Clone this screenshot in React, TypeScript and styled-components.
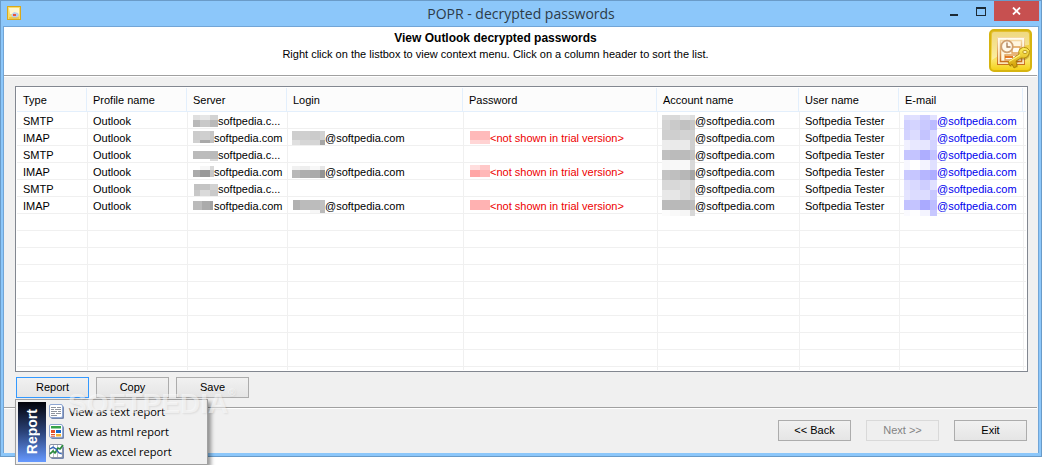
import React from 'react';
import styled, { createGlobalStyle } from 'styled-components';

const uiFont = '"Liberation Sans", Arial, sans-serif';
const shellFont = '"Open Sans", "Noto Sans", sans-serif';

const GlobalStyle = createGlobalStyle`
  * { box-sizing: border-box; }
  body { margin: 0; min-height: 100vh; background: #fff; font-family: ${uiFont}; font-size: 11px; color: #000; }
  button { font: inherit; color: inherit; padding: 0; }
`;

/* ---------- window frame ---------- */

const Window = styled.div`
  position: relative;
  border: 1px solid #6a9bc8;
  background: #8cc7fa;
  padding: 0 2px 3px;
`;

const TitleBar = styled.header`
  display: grid;
  grid-template-columns: 1fr auto 1fr;
  height: 25px;
`;

const AppIcon = styled.div`
  padding: 5px 0 0 4px;
  line-height: 0;
`;

const Title = styled.h1`
  margin: 0;
  font: 400 14px/25px ${shellFont};
  color: #2c3b48;
`;

const Controls = styled.div`
  display: flex;
  justify-content: flex-end;
  align-items: flex-start;
`;

const ControlButton = styled.button<{ $close?: boolean }>`
  display: flex;
  align-items: center;
  justify-content: center;
  width: ${p => (p.$close ? 45 : 27)}px;
  height: 20px;
  border: 0;
  background: ${p => (p.$close ? '#c75050' : 'transparent')};
`;

const Client = styled.main`
  border: 1px solid #72a5d6;
  border-bottom: 0;
  background: #f0f0f0;
`;

/* ---------- banner ---------- */

const Banner = styled.section`
  display: flex;
  align-items: flex-start;
  height: 48px;
  padding: 2px 6px 0 0;
  background: #fff;
`;

const BannerText = styled.div`
  flex: 1;
  padding-right: 2px;
  text-align: center;
`;

const Heading = styled.h2`
  margin: 0;
  font: 700 12px/18px ${uiFont};
`;

const Hint = styled.p`
  margin: 0;
  line-height: 14px;
`;

const Divider = styled.hr`
  height: 2px;
  margin: 0 1px 0 0;
  border: 0;
  border-top: 1px solid #a0a0a0;
  border-bottom: 1px solid #fff;
`;

/* ---------- list ---------- */

const Body = styled.section`
  padding: 9px 10px 9px 11px;
`;

const ListFrame = styled.div`
  padding: 1px;
  border: 1px solid #828790;
  background: #fff;
`;

const List = styled.table`
  width: 100%;
  table-layout: fixed;
  border-collapse: separate;
  border-spacing: 0;
  text-align: left;
`;

const HeadCell = styled.th`
  height: 24px;
  padding: 0 0 0 6px;
  border-bottom: 1px solid #e3effc;
  border-right: 1px solid #e3effc;
  background: #fcfcfc;
  font-weight: 400;

  &:last-child { border-right: 0; }
`;

const SortButton = styled.button`
  display: block;
  width: 100%;
  border: 0;
  background: none;
  text-align: left;
  line-height: 22px;
`;

const Cell = styled.td<{ $short?: boolean }>`
  height: ${p => (p.$short ? 3 : 17)}px;
  padding: 0 0 0 5px;
  border-left: 1px solid #f0f0f0;
  border-bottom: ${p => (p.$short ? 0 : 1)}px solid #f0f0f0;
  white-space: nowrap;

  &:first-child { border-left: 0; padding-left: 6px; }
`;

const CellContent = styled.div<{ $tone?: string }>`
  display: flex;
  height: 16px;
  line-height: 18px;
  color: ${p => p.$tone || 'inherit'};
`;

const MailLink = styled.a`
  color: #0000ee;
  text-decoration: none;
`;

const MosaicSvg = styled.svg`
  flex: none;
  overflow: visible;
`;

/* ---------- buttons ---------- */

const ButtonRow = styled.div<{ $end?: boolean }>`
  display: flex;
  gap: ${p => (p.$end ? 15 : 7)}px;
  justify-content: ${p => (p.$end ? 'flex-end' : 'flex-start')};
  padding: ${p => (p.$end ? '11px 11px 12px' : '5px 0 0 1px')};
`;

const PushButton = styled.button<{ $active?: boolean }>`
  width: 73px;
  height: 21px;
  border: 1px solid ${p => (p.$active ? '#3399ff' : '#acacac')};
  background: linear-gradient(#f1f1f1, #e5e5e5);
  line-height: 19px;

  &:disabled {
    border-color: #d9d9d9;
    background: #efefef;
    color: #838383;
  }
`;

const ReportAnchor = styled.div`
  position: relative;
  display: flex;
`;

/* ---------- pop-up menu ---------- */

const Menu = styled.div`
  position: absolute;
  z-index: 1;
  top: 22px;
  left: -1px;
  display: flex;
  width: 193px;
  padding: 2px;
  border: 1px solid #a0a0a0;
  background: #f0f0f0;
  box-shadow: 3px 3px 4px rgba(0, 0, 0, 0.4);
`;

const MenuSide = styled.div`
  display: flex;
  align-items: center;
  justify-content: center;
  width: 28px;
  background: linear-gradient(#02030a, #2b4379 50%, #6699ff);
`;

const MenuSideLabel = styled.span`
  writing-mode: vertical-rl;
  transform: rotate(180deg);
  font: 700 14px/20px ${uiFont};
  color: #fff;
`;

const MenuItems = styled.div`
  flex: 1;
`;

const MenuItem = styled.button`
  display: flex;
  align-items: center;
  gap: 4px;
  width: 100%;
  height: 20px;
  padding-left: 3px;
  border: 0;
  background: none;
  font: 400 11px/20px ${shellFont};
  text-align: left;
  white-space: nowrap;
`;

const Watermark = styled.div`
  position: absolute;
  z-index: 2;
  left: 67px;
  top: 385px;
  display: flex;
  font: 700 28px/36px ${uiFont};
  color: rgba(255, 255, 255, 0.5);
  text-shadow: 1px 1px 2px rgba(0, 0, 0, 0.08);
  pointer-events: none;
`;

const WatermarkMark = styled.span`
  font-size: 10px;
  line-height: 14px;
`;

/* ---------- pixelated name blocks ---------- */

type Block = { width: number; x: number[]; y: number[]; fills: string[][] };

function Mosaic({ block }: { block: Block }) {
  const { width, x, y, fills } = block;
  return (
    <MosaicSvg width={width} height={16} shapeRendering="crispEdges" aria-hidden="true">
      {fills.map((row, r) =>
        row.map((fill, c) =>
          fill ? (
            <rect key={`${r}-${c}`} x={x[c]} y={y[r]} width={x[c + 1] - x[c]} height={y[r + 1] - y[r]} fill={`#${fill}`} />
          ) : null,
        ),
      )}
    </MosaicSvg>
  );
}

const grey = (rows: string[]) => rows.map(r => r.split(' ').map(v => (v === '--' ? '' : v + v + v)));
const blue = (rows: string[]) => rows.map(r => r.split(' ').map(v => v + v + 'ff'));
const red = (rows: string[]) => rows.map(r => r.split(' ').map(v => 'ff' + v + v));

const serverX = [0, 7, 17, 25];
const serverShortX = [0, 7, 17, 21];
const serverBlocks: Block[] = [
  { width: 25, x: serverX, y: [3, 8, 15], fills: grey(['df e6 d3', 'b9 c9 b9']) },
  { width: 21, x: serverShortX, y: [2, 11, 14], fills: grey(['cb cf c6', 'd0 a9 c2']) },
  { width: 25, x: serverX, y: [5, 13, 15], fills: grey(['ba bc ba', '-- -- d9']) },
  { width: 21, x: serverShortX, y: [3, 7, 14], fills: grey(['-- f7 d8', 'ab 98 c6']) },
  { width: 25, x: [1, 7, 17, 25], y: [4, 10, 16], fills: grey(['c2 c4 d2', 'c8 da ca']) },
  { width: 21, x: [0, 9, 17, 20], y: [4, 13], fills: grey(['bb ab a2']) },
];

const loginX = [-1, 7, 17, 27, 32];
const loginBlocks: (Block | null)[] = [
  null,
  { width: 32, x: loginX, y: [2, 11, 16], fills: grey(['ce cf cb d2', 'df d6 d5 a5']) },
  null,
  { width: 32, x: loginX, y: [3, 7, 15], fills: grey(['f1 ee f8 e6', 'b8 ae aa 94']) },
  null,
  { width: 32, x: [0, 7, 17, 27, 32], y: [3, 13, 16], fills: grey(['b1 bb bc c1', '-- -- f7 b9']) },
];

const passwordX = [1, 11, 21];
const passwordBlocks: (Block | null)[] = [
  null,
  { width: 21, x: passwordX, y: [2, 11, 15], fills: red(['b9 bb', 'd6 d2']) },
  null,
  { width: 21, x: passwordX, y: [2, 7, 14], fills: red(['de c8', 'a6 b8']) },
  null,
  { width: 21, x: passwordX, y: [3, 13], fills: red(['b1 b3']) },
];

const tallY = [3, 8, 18, 28, 38, 48, 58, 68, 78, 88, 98, 104];
const accountBlock: Block = {
  width: 32,
  x: [-1, 7, 17, 27, 32],
  y: tallY,
  fills: grey([
    'da d9 e6 de', 'd3 ca c1 c8', 'cf cf d3 d0', 'ec ea ea cf', 'c0 bb bb c4', 'f7 f8 f8 d9',
    'c4 bf b7 a6', 'd8 d8 dd d4', 'e8 e6 dc cf', 'bb b9 b9 be', 'fc f9 f6 d8',
  ]),
};
const emailBlock: Block = {
  width: 32,
  x: [-1, 5, 15, 25, 32],
  y: tallY,
  fills: blue([
    'de e0 ce e2', 'd0 d4 c9 bc', 'd3 dc c4 d9', 'f0 e8 e6 d3', 'c6 c4 ae c4', 'f7 ff f3 e0',
    'ca c6 b6 ae', 'e0 d9 ce e0', 'e4 dc dc c8', 'c2 c4 aa bd', 'fa fe f4 c8',
  ]),
};
const spacer: Block = { width: 32, x: [], y: [], fills: [] };

/* ---------- icons ---------- */

function OutlookKeyIcon({ size }: { size: number }) {
  return (
    <svg width={size} height={size} viewBox="0 0 43 43" aria-hidden="true">
      <defs>
        <linearGradient id="gold" x1="0" y1="0" x2="0" y2="1">
          <stop offset="0" stopColor="#e3bd2c" />
          <stop offset="0.4" stopColor="#f0d045" />
          <stop offset="0.75" stopColor="#fbe463" />
          <stop offset="1" stopColor="#f3cf10" />
        </linearGradient>
        <linearGradient id="panel" x1="0" y1="0" x2="0" y2="1">
          <stop offset="0" stopColor="#fffdf4" />
          <stop offset="1" stopColor="#fbe3b4" />
        </linearGradient>
        <linearGradient id="frame" x1="0" y1="0" x2="0" y2="1">
          <stop offset="0" stopColor="#f5d9a4" />
          <stop offset="1" stopColor="#c96f1e" />
        </linearGradient>
        <linearGradient id="key" x1="0" y1="0" x2="0" y2="1">
          <stop offset="0" stopColor="#fff05e" />
          <stop offset="1" stopColor="#cf9a00" />
        </linearGradient>
      </defs>
      <rect x="1" y="1" width="41" height="41" rx="4" fill="url(#gold)" stroke="#d6b410" strokeWidth="2" />
      <path d="M3 5Q3 3 5 3H38Q40 3 40 5V16Q24 17 3 31Z" fill="#fff" opacity="0.4" />
      <rect x="8.5" y="8.500" width="27" height="27" fill="url(#panel)" stroke="url(#frame)" />
      <rect x="11.500" y="11.500" width="21" height="21" fill="#fff6df" stroke="url(#frame)" strokeWidth="1.500" />
      <path d="M23 18h8v6h-8zM16 26h12v5H16z" fill="#fffdf6" stroke="#e0a055" strokeWidth="1.300" />
      <path d="M16 28h8" stroke="#e06a10" strokeWidth="1.800" />
      <circle cx="18" cy="17.500" r="5.800" fill="#fff9ea" stroke="#cfa070" strokeWidth="1.800" />
      <path d="M18 13.500v4.500h3.500" fill="none" stroke="#a77b55" strokeWidth="1.300" />
      <path d="M32 21q6-2 8 2t-2 7q-3 2-7 1L28 35l1 3-3 1-2-2-3 1-1-4L30 27q-1-4 2-6z" fill="#6b4a00" opacity="0.3" />
      <path
        d="M31 20q3-3 7-1t2 6q-2 5-8 4l-5 3 1 5-3 2-2-4-2 2-2-4 11-8q-1-3 1-5z"
        fill="url(#key)"
        stroke="#a87c00"
        strokeWidth="0.800"
      />
      <path d="M20 32.500L31 26" stroke="#fff27a" strokeWidth="1.200" />
      <ellipse cx="36" cy="23" rx="2.200" ry="1.600" fill="#fdf3b0" stroke="#a87c00" strokeWidth="0.700" />
    </svg>
  );
}

function SmallAppIcon() {
  return (
    <svg width="14" height="14" viewBox="0 0 14 14" aria-hidden="true">
      <rect x="0.500" y="0.500" width="13" height="13" fill="#f8dd6c" stroke="#d9a81c" />
      <path d="M2 2h10v7l-2-1H3z" fill="#fff6cf" />
      <path d="M4 9l3-3 4 1 1 2-2 3H6z" fill="#b9cdea" />
      <path d="M6 8h3v2H6z" fill="#e8543c" />
      <path d="M2 12h10" stroke="#e3b62c" />
    </svg>
  );
}

function MenuGlyph({ kind }: { kind: 'text' | 'html' | 'excel' }) {
  return (
    <svg width="16" height="16" viewBox="0 0 16 16" aria-hidden="true">
      <rect x="2" y="2" width="13" height="13" rx="1.500" fill="#7486ad" />
      <rect x="0.500" y="0.500" width="13" height="13" rx="1.500" fill="#fff" stroke={kind === 'excel' ? '#8a93a5' : '#8ea6d2'} />
      {kind === 'text' && (
        <path d="M2 3.500h5M8 3.500h4M2 5.500h3M6 5.500h6M2 7.500h6M9 7.500h3M2 9.500h4M7 9.500h5M2 11.500h6" stroke="#8f949e" />
      )}
      {kind === 'html' && (
        <>
          <path d="M2 2h10v2.500H2z" fill="#35a24a" />
          <path d="M2 6h4v3H2z" fill="#e2502c" />
          <path d="M7 6h5v3H7z" fill="#1767c9" />
          <path d="M2 10.500h4M2 12.200h4" stroke="#e2502c" />
          <path d="M7 10h5v2.500H7z" fill="#f3b432" />
        </>
      )}
      {kind === 'excel' && (
        <>
          <path d="M1 4.500h12M1 8.500h12M4.500 1v12M8.500 1v12" stroke="#b9bfca" />
          <path d="M1 10L4 7l2 2 3-5 2 1 3-4" fill="none" stroke="#2a8c3c" strokeWidth="1.700" />
          <path d="M1 5l3-2 3 2 3 4 3 1" fill="none" stroke="#2e62b8" strokeWidth="1.300" />
        </>
      )}
    </svg>
  );
}

/* ---------- data ---------- */

const columns: { label: string; width: number }[] = [
  { label: 'Type', width: 70 },
  { label: 'Profile name', width: 100 },
  { label: 'Server', width: 100 },
  { label: 'Login', width: 176 },
  { label: 'Password', width: 194 },
  { label: 'Account name', width: 142 },
  { label: 'User name', width: 100 },
  { label: 'E-mail', width: 124 },
];

const accounts = ['SMTP', 'IMAP', 'SMTP', 'IMAP', 'SMTP', 'IMAP'];
const emptyRows = 9;

function AccountRow({ type, index }: { type: string; index: number }) {
  const login = loginBlocks[index];
  const password = passwordBlocks[index];
  return (
    <tr>
      <Cell><CellContent>{type}</CellContent></Cell>
      <Cell><CellContent>Outlook</CellContent></Cell>
      <Cell>
        <CellContent>
          <Mosaic block={serverBlocks[index]} />
          {type === 'SMTP' ? 'softpedia.c...' : 'softpedia.com'}
        </CellContent>
      </Cell>
      <Cell>{login && <CellContent><Mosaic block={login} />@softpedia.com</CellContent>}</Cell>
      <Cell>
        {password && (
          <CellContent $tone="#ee0000"><Mosaic block={password} />&lt;not shown in trial version&gt;</CellContent>
        )}
      </Cell>
      <Cell><CellContent><Mosaic block={index === 0 ? accountBlock : spacer} />@softpedia.com</CellContent></Cell>
      <Cell><CellContent>Softpedia Tester</CellContent></Cell>
      <Cell>
        <CellContent>
          <Mosaic block={index === 0 ? emailBlock : spacer} />
          <MailLink href="#mail">@softpedia.com</MailLink>
        </CellContent>
      </Cell>
      <Cell />
    </tr>
  );
}

function EmptyRow({ short }: { short?: boolean }) {
  return (
    <tr>
      {Array.from({ length: columns.length + 1 }, (_, i) => <Cell key={i} $short={short} />)}
    </tr>
  );
}

export default function App() {
  return (
    <>
      <GlobalStyle />
      <Window>
        <TitleBar>
          <AppIcon><SmallAppIcon /></AppIcon>
          <Title>POPR - decrypted passwords</Title>
          <Controls>
            <ControlButton aria-label="Minimize">
              <svg width="10" height="10"><path d="M1 8h8v2H1z" fill="#1c2a36" /></svg>
            </ControlButton>
            <ControlButton aria-label="Maximize">
              <svg width="10" height="9" shapeRendering="crispEdges">
                <path d="M0 0h10v9H0zM1 2v6h8V2z" fillRule="evenodd" fill="#1c2a36" />
              </svg>
            </ControlButton>
            <ControlButton $close aria-label="Close">
              <svg width="9" height="8"><path d="M1 0.500l7 7M8 0.500L1 7.500" stroke="#fff" strokeWidth="1.800" /></svg>
            </ControlButton>
          </Controls>
        </TitleBar>
        <Client>
          <Banner>
            <BannerText>
              <Heading>View Outlook decrypted passwords</Heading>
              <Hint>Right click on the listbox to view context menu. Click on a column header to sort the list.</Hint>
            </BannerText>
            <OutlookKeyIcon size={43} />
          </Banner>
          <Divider />
          <Body>
            <ListFrame>
              <List>
                <colgroup>
                  {columns.map(c => <col key={c.label} width={c.width} />)}
                  <col />
                </colgroup>
                <thead>
                  <tr>
                    {columns.map(c => (
                      <HeadCell key={c.label} scope="col"><SortButton>{c.label}</SortButton></HeadCell>
                    ))}
                    <HeadCell as="td" />
                  </tr>
                </thead>
                <tbody>
                  {accounts.map((type, i) => <AccountRow key={i} type={type} index={i} />)}
                  {Array.from({ length: emptyRows }, (_, i) => <EmptyRow key={i} />)}
                  <EmptyRow short />
                </tbody>
              </List>
            </ListFrame>
            <ButtonRow>
              <ReportAnchor>
                <PushButton $active aria-haspopup="menu" aria-expanded="true">Report</PushButton>
                <Menu role="menu" aria-label="Report">
                  <MenuSide><MenuSideLabel>Report</MenuSideLabel></MenuSide>
                  <MenuItems>
                    <MenuItem role="menuitem"><MenuGlyph kind="text" />View as text report</MenuItem>
                    <MenuItem role="menuitem"><MenuGlyph kind="html" />View as html report</MenuItem>
                    <MenuItem role="menuitem"><MenuGlyph kind="excel" />View as excel report</MenuItem>
                  </MenuItems>
                </Menu>
              </ReportAnchor>
              <PushButton>Copy</PushButton>
              <PushButton>Save</PushButton>
            </ButtonRow>
          </Body>
          <Divider />
          <ButtonRow $end>
            <PushButton>&lt;&lt; Back</PushButton>
            <PushButton disabled>Next &gt;&gt;</PushButton>
            <PushButton>Exit</PushButton>
          </ButtonRow>
        </Client>
        <Watermark aria-hidden="true">SOFTPEDIA<WatermarkMark>®</WatermarkMark></Watermark>
      </Window>
    </>
  );
}
